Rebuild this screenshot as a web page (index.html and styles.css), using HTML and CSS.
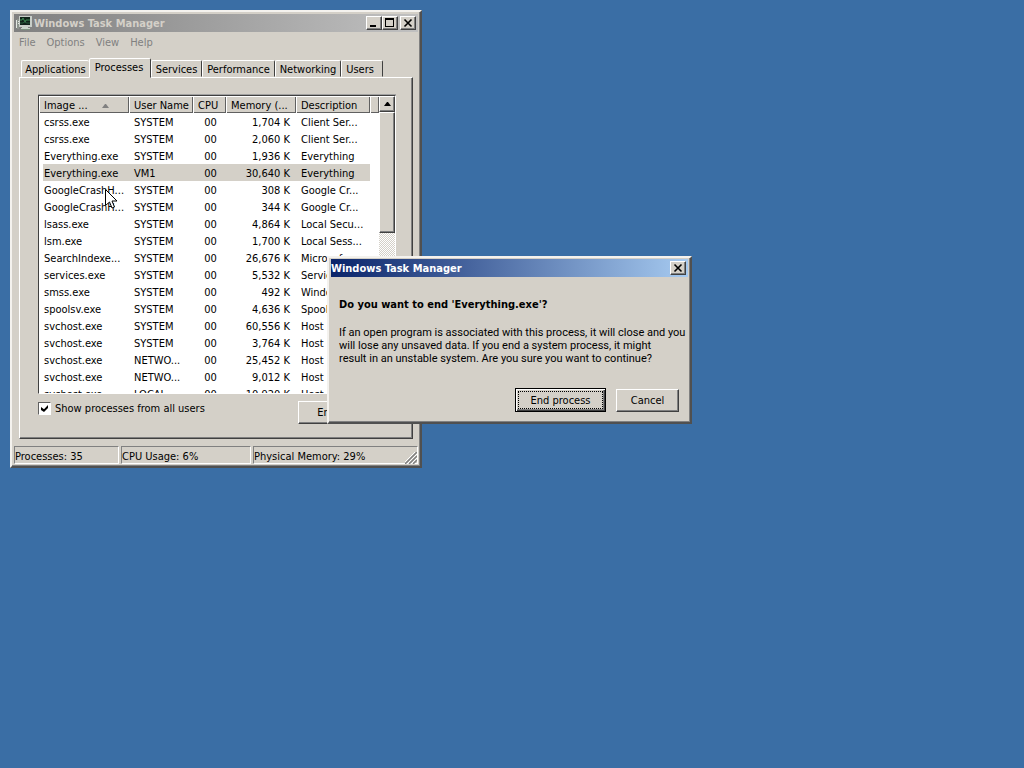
FILE: index.html
```html
<!DOCTYPE html>
<html lang="en">
<head>
<meta charset="utf-8">
<title>Windows Task Manager</title>
<link rel="stylesheet" href="styles.css">
</head>
<body>
<main class="desktop">
  <section class="window task-manager" aria-labelledby="tm-title">
    <header class="titlebar titlebar-inactive">
      <svg class="app-icon" width="16" height="16" viewBox="0 0 16 16" aria-hidden="true">
        <path d="M1 4h2v10H1z" fill="#8c938c"/>
        <path d="M0 5h1v8H0zM2 6h1v1H2zM2 8h1v1H2z" fill="#e4e8e4"/>
        <path d="M3 1h13v11H3z" fill="#c8cec8"/>
        <path d="M4 2h10v8H4z" fill="#10231a"/>
        <path d="M4 5h2l1-2 2 4 1-2h4" fill="none" stroke="#3f8b55"/>
        <path d="M4 8h3l1-1 3 1h3" fill="none" stroke="#27573a"/>
        <path d="M6 12h6v1h2v2H5v-2h1z" fill="#c9d6cb"/>
        <path d="M5 14h9v1H5z" fill="#7d927f"/>
      </svg>
      <h1 class="title" id="tm-title">Windows Task Manager</h1>
      <div class="caption-buttons">
        <button class="caption" aria-label="Minimize"><svg width="12" height="10" viewBox="0 0 12 10"><path d="M2 7h6v2H2z"/></svg></button>
        <button class="caption" aria-label="Maximize"><svg width="12" height="10" viewBox="0 0 12 10"><path fill-rule="evenodd" d="M1 0h9v9H1zM2 2v6h7V2z"/></svg></button>
        <button class="caption caption-close" aria-label="Close"><svg width="12" height="10" viewBox="0 0 12 10"><path d="M2.500 1.500l7 7M9.500 1.500l-7 7" stroke="#000" stroke-width="1.600"/></svg></button>
      </div>
    </header>
    <nav class="menubar">
      <button class="menu">File</button><button class="menu">Options</button><button class="menu">View</button><button class="menu">Help</button>
    </nav>
    <div class="body">
      <div class="tabs" role="tablist">
        <button class="tab tab-applications" role="tab">Applications</button>
        <button class="tab tab-processes tab-selected" role="tab" aria-selected="true">Processes</button>
        <button class="tab tab-services" role="tab">Services</button>
        <button class="tab tab-performance" role="tab">Performance</button>
        <button class="tab tab-networking" role="tab">Networking</button>
        <button class="tab tab-users" role="tab">Users</button>
      </div>
      <div class="panel" role="tabpanel">
        <div class="list">
          <table class="processes">
            <colgroup><col class="c-image"><col class="c-user"><col class="c-cpu"><col class="c-mem"><col class="c-desc"><col></colgroup>
            <thead>
              <tr><th><span class="sorted">Image ...<svg width="7" height="4" viewBox="0 0 7 4" aria-hidden="true"><path d="M3 0h1l3 4H0z" fill="#808080"/></svg></span></th><th>User Name</th><th>CPU</th><th>Memory (...</th><th>Description</th><th></th></tr>
            </thead>
            <tbody>
              <tr><td>csrss.exe</td><td>SYSTEM</td><td>00</td><td>1,704 K</td><td>Client Ser...</td><td></td></tr>
              <tr><td>csrss.exe</td><td>SYSTEM</td><td>00</td><td>2,060 K</td><td>Client Ser...</td><td></td></tr>
              <tr><td>Everything.exe</td><td>SYSTEM</td><td>00</td><td>1,936 K</td><td>Everything</td><td></td></tr>
              <tr class="selected"><td>Everything.exe</td><td>VM1</td><td>00</td><td>30,640 K</td><td>Everything</td><td></td></tr>
              <tr><td>GoogleCrashH...</td><td>SYSTEM</td><td>00</td><td>308 K</td><td>Google Cr...</td><td></td></tr>
              <tr><td>GoogleCrashH...</td><td>SYSTEM</td><td>00</td><td>344 K</td><td>Google Cr...</td><td></td></tr>
              <tr><td>lsass.exe</td><td>SYSTEM</td><td>00</td><td>4,864 K</td><td>Local Secu...</td><td></td></tr>
              <tr><td>lsm.exe</td><td>SYSTEM</td><td>00</td><td>1,700 K</td><td>Local Sess...</td><td></td></tr>
              <tr><td>SearchIndexe...</td><td>SYSTEM</td><td>00</td><td>26,676 K</td><td>Microsof...</td><td></td></tr>
              <tr><td>services.exe</td><td>SYSTEM</td><td>00</td><td>5,532 K</td><td>Services</td><td></td></tr>
              <tr><td>smss.exe</td><td>SYSTEM</td><td>00</td><td>492 K</td><td>Windows</td><td></td></tr>
              <tr><td>spoolsv.exe</td><td>SYSTEM</td><td>00</td><td>4,636 K</td><td>Spooler</td><td></td></tr>
              <tr><td>svchost.exe</td><td>SYSTEM</td><td>00</td><td>60,556 K</td><td>Host Pro...</td><td></td></tr>
              <tr><td>svchost.exe</td><td>SYSTEM</td><td>00</td><td>3,764 K</td><td>Host Pro...</td><td></td></tr>
              <tr><td>svchost.exe</td><td>NETWO...</td><td>00</td><td>25,452 K</td><td>Host Pro...</td><td></td></tr>
              <tr><td>svchost.exe</td><td>NETWO...</td><td>00</td><td>9,012 K</td><td>Host Pro...</td><td></td></tr>
              <tr><td>svchost.exe</td><td>LOCAL ...</td><td>00</td><td>10,920 K</td><td>Host Pro...</td><td></td></tr>
            </tbody>
          </table>
          <div class="scrollbar">
            <button class="scroll-arrow" aria-label="Scroll up"><svg width="7" height="4" viewBox="0 0 7 4"><path d="M3 0h1l3 4H0z"/></svg></button>
            <div class="scroll-thumb"></div>
          </div>
        </div>
        <div class="actions">
          <label class="check"><input type="checkbox" checked>Show processes from all users</label>
          <button class="button end-main">End Process</button>
        </div>
      </div>
    </div>
    <footer class="statusbar">
      <span class="pane pane-processes">Processes: 35</span>
      <span class="pane pane-cpu">CPU Usage: 6%</span>
      <span class="pane pane-memory">Physical Memory: 29%
        <svg width="12" height="12" viewBox="0 0 12 12" aria-hidden="true"><path d="M0 12L12 0M4 12l8-8M8 12l4-4" stroke="#808080" stroke-width="1.500"/><path d="M-1 11L11-1M3 11l9-9M7 11l5-5" stroke="#fff"/></svg>
      </span>
    </footer>
  </section>

  <svg class="cursor" width="13" height="21" viewBox="0 0 13 21" aria-hidden="true"><path d="M.5.5v16l4-3.500 2.500 6 2.500-1-2.500-6h5z" fill="#fff" stroke="#000"/></svg>

  <section class="window dialog" role="dialog" aria-labelledby="dlg-title">
    <header class="titlebar titlebar-active">
      <h2 class="title" id="dlg-title">Windows Task Manager</h2>
      <div class="caption-buttons">
        <button class="caption" aria-label="Close"><svg width="12" height="10" viewBox="0 0 12 10"><path d="M2.500 1.500l7 7M9.500 1.500l-7 7" stroke="#000" stroke-width="1.600"/></svg></button>
      </div>
    </header>
    <div class="dialog-body">
      <h3 class="question">Do you want to end 'Everything.exe'?</h3>
      <p class="message">If an open program is associated with this process, it will close and you<br>will lose any unsaved data. If you end a system process, it might<br>result in an unstable system. Are you sure you want to continue?</p>
      <div class="dialog-buttons">
        <button class="button default"><span class="focus">End process</span></button>
        <button class="button cancel">Cancel</button>
      </div>
    </div>
  </section>
</main>
</body>
</html>
```
FILE: styles.css
```css
* { box-sizing: border-box; }

body {
  margin: 0;
  background: #3a6ea5;
  color: #000;
  font: 11px/13px "DejaVu Sans Condensed", "DejaVu Sans", sans-serif;
}

h1, h2, h3, p { margin: 0; font-size: inherit; }
button { font: inherit; color: inherit; padding: 0; border: 0; background: none; white-space: nowrap; }
svg { display: block; flex: none; }

.desktop { position: relative; min-height: 100vh; overflow: hidden; }

.window {
  position: absolute;
  padding: 2px;
  background: #d4d0c8;
  border: 2px solid;
  border-color: #f4f2ee #505050 #505050 #f4f2ee;
  box-shadow: inset -1px -1px #808080;
}
.task-manager { left: 10px; top: 10px; width: 412px; }
.dialog { left: 327px; top: 256px; width: 365px; padding: 1px 2px 2px; }

.titlebar { display: flex; align-items: center; height: 18px; padding: 0 2px; }
.titlebar-inactive { color: #d4d0c8; background: linear-gradient(90deg, #808080, #c0c0c0); }
.titlebar-active { color: #fff; background: linear-gradient(90deg, #0a246a, #a6caf0); }
.title { flex: 1; font-weight: bold; white-space: nowrap; }
.app-icon { margin-right: 2px; }
.dialog .titlebar { padding-left: 0; }
.caption-buttons { display: flex; }
.caption {
  display: grid;
  place-items: center;
  width: 16px;
  height: 14px;
  background: #d4d0c8;
  border: 1px solid;
  border-color: #fff #404040 #404040 #fff;
  box-shadow: inset -1px -1px #808080;
}
.caption-close { margin-left: 2px; }

.menubar { display: flex; gap: 11px; padding: 3px 5px; color: #808080; height: 20px; }

.body { padding: 6px 5px 0; }
.tabs { display: flex; align-items: flex-end; height: 19px; padding-left: 2px; }
.tab {
  height: 17px;
  padding-top: 2px;
  border: 1px solid;
  border-color: #fff #404040 transparent #fff;
  border-radius: 2px 2px 0 0;
}
.tab-selected { height: 20px; margin-bottom: -1px; padding: 0 2px 2px 0; background: #d4d0c8; position: relative; }
.tab-applications { width: 68px; border-right: 0; }
.tab-processes { width: 62px; }
.tab-services { width: 51px; }
.tab-performance { width: 73px; }
.tab-networking { width: 66px; }
.tab-users { width: 42px; padding-right: 4px; }

.panel {
  padding: 17px 16px 14px 18px;
  border: 1px solid;
  border-color: #fff #404040 #404040 #fff;
  box-shadow: inset -1px -1px #808080;
}

.list {
  display: flex;
  height: 299px;
  overflow: hidden;
  background: #fff;
  border: 1px solid;
  border-color: #404040 #fff #fff #404040;
  box-shadow: 0 -1px #a0a0a0;
}
.processes { flex: 1; align-self: flex-start; table-layout: fixed; border-collapse: collapse; width: 0; }
.c-image { width: 90px; }
.c-user { width: 64px; }
.c-cpu { width: 33px; }
.c-mem { width: 70px; }
.c-desc { width: 74px; }
th, td { height: 17px; padding: 2px 5px 0; font-weight: normal; text-align: left; white-space: nowrap; overflow: hidden; }
th { background: #d4d0c8; box-shadow: inset 1px 1px #fff, inset -1px -1px #606060; }
td:nth-child(3) { padding-left: 7px; text-align: center; }
td:nth-child(4) { padding-right: 6px; text-align: right; }
.sorted { display: flex; align-items: center; gap: 14px; }
.selected td { background: #d4d0c8; }
.selected td:first-child { box-shadow: inset 4px 0 #fff; }
.selected td:last-child { background: #fff; }

.scrollbar { width: 16px; background: repeating-conic-gradient(#fff 0 25%, #d4d0c8 0 50%) 0 0 / 2px 2px; }
.scroll-arrow, .scroll-thumb {
  display: grid;
  place-items: center;
  width: 16px;
  height: 16px;
  background: #d4d0c8;
  border: 1px solid;
  border-color: #fff #404040 #404040 #fff;
  box-shadow: inset -1px -1px #808080;
}
.scroll-thumb { height: 121px; }

.actions { display: flex; justify-content: space-between; align-items: flex-start; padding-top: 7px; }
.check { display: flex; align-items: center; gap: 4px; padding-top: 1px; }
.check input {
  appearance: none;
  width: 13px;
  height: 13px;
  margin: 0;
  border: 1px solid;
  border-color: #606060 #fff #fff #606060;
  background: #fff;
  display: grid;
  place-items: center;
}
.check input:checked::before {
  content: "";
  width: 7px;
  height: 7px;
  background: #000;
  clip-path: polygon(0 29%, 43% 60%, 100% 0, 100% 43%, 43% 100%, 0 71%);
}

.button {
  height: 23px;
  background: #d4d0c8;
  border: 1px solid;
  border-color: #fff #404040 #404040 #fff;
  box-shadow: inset -1px -1px #808080;
}
.end-main { width: 98px; }

.statusbar { display: flex; gap: 2px; padding-top: 7px; }
.pane {
  height: 18px;
  padding-top: 3px;
  border: 1px solid;
  border-color: #808080 #fff #fff #808080;
  white-space: nowrap;
}
.pane-processes { width: 105px; }
.pane-cpu { width: 130px; }
.pane-memory { flex: 1; display: flex; justify-content: space-between; }
.pane-memory svg { margin-top: 2px; }

.cursor { position: absolute; left: 105px; top: 189px; }

.dialog-body { padding: 21px 9px 8px 8px; }
.question { font-weight: bold; }
.message { margin-top: 15px; font-family: Roboto, "Liberation Sans", sans-serif; white-space: nowrap; }
.dialog-buttons { display: flex; align-items: center; justify-content: flex-end; gap: 10px; margin-top: 23px; }
.default { width: 91px; height: 24px; padding: 2px; border-color: #000; box-shadow: inset 1px 1px #fff, inset -1px -1px #404040, inset -2px -2px #808080; }
.focus { display: grid; place-items: center; height: 18px; border: 1px dotted #000; }
.cancel { width: 63px; }
```
